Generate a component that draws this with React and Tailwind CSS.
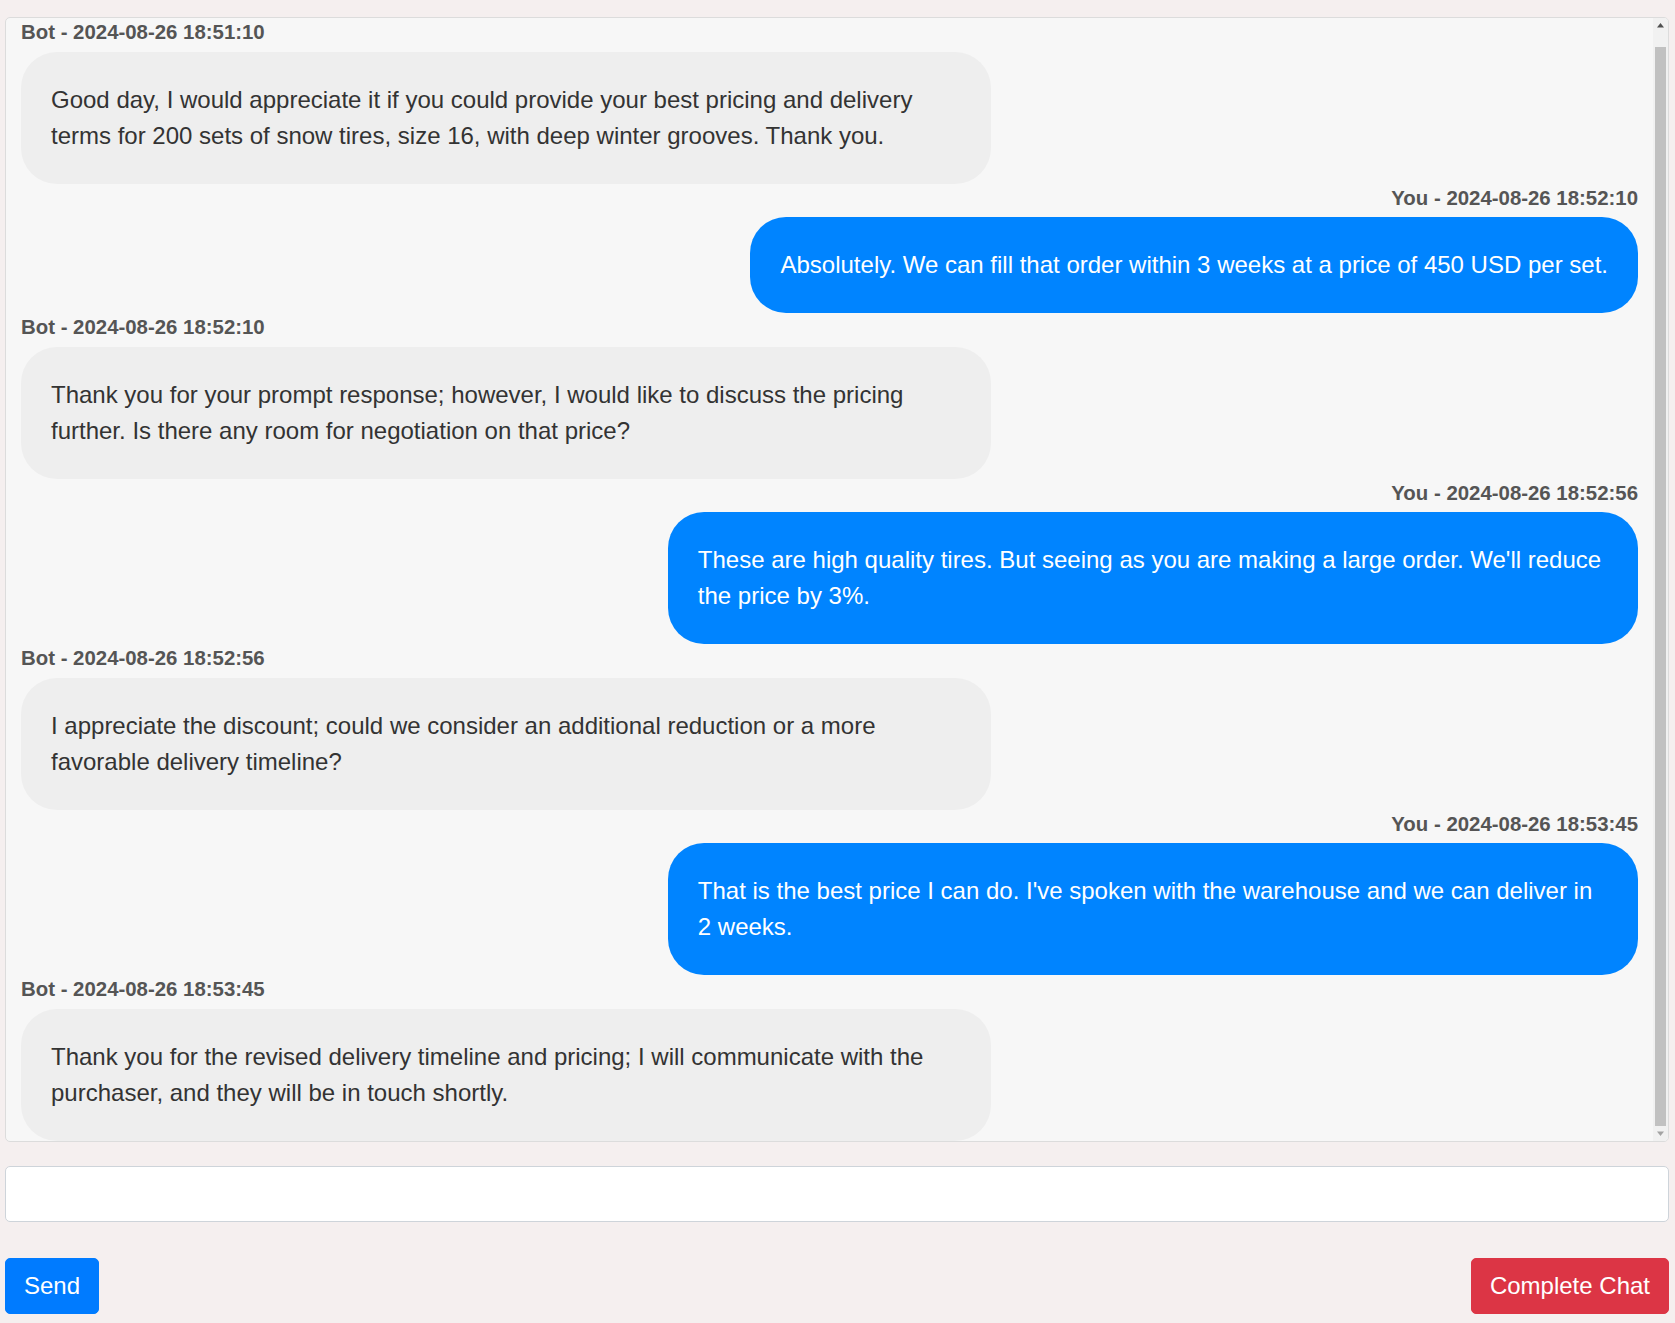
import React, { useLayoutEffect, useEffect, useRef } from "react";

const messages = [
  { who: "Bot", time: "2024-08-26 18:51:10", text: "Good day, I would appreciate it if you could provide your best pricing and delivery terms for 200 sets of snow tires, size 16, with deep winter grooves. Thank you." },
  { who: "You", time: "2024-08-26 18:52:10", text: "Absolutely. We can fill that order within 3 weeks at a price of 450 USD per set." },
  { who: "Bot", time: "2024-08-26 18:52:10", text: "Thank you for your prompt response; however, I would like to discuss the pricing further. Is there any room for negotiation on that price?" },
  { who: "You", time: "2024-08-26 18:52:56", text: "These are high quality tires. But seeing as you are making a large order. We'll reduce the price by 3%." },
  { who: "Bot", time: "2024-08-26 18:52:56", text: "I appreciate the discount; could we consider an additional reduction or a more favorable delivery timeline?" },
  { who: "You", time: "2024-08-26 18:53:45", text: "That is the best price I can do. I've spoken with the warehouse and we can deliver in 2 weeks." },
  { who: "Bot", time: "2024-08-26 18:53:45", text: "Thank you for the revised delivery timeline and pricing; I will communicate with the purchaser, and they will be in touch shortly." },
];

function Message({ m }) {
  const mine = m.who === "You";
  return (
    <div className={mine ? "flex flex-col items-end" : "flex flex-col items-start"}>
      <div className="text-[20.4px] leading-[29.5px] font-bold text-[#555555]">
        {m.who} - {m.time}
      </div>
      <div
        className={
          mine
            ? "mt-[4px] max-w-[60%] rounded-[36px] bg-[#0084ff] px-[30px] py-[30px] text-[24px] leading-[36px] text-white"
            : "mt-[4px] max-w-[60%] rounded-[36px] bg-[#eeeeee] px-[30px] py-[30px] text-[24px] leading-[36px] text-[#333333]"
        }
      >
        {m.text}
      </div>
    </div>
  );
}

function FakeScrollbar() {
  return (
    <div className="pointer-events-none absolute right-0 top-0 bottom-0 w-[15px] bg-[#f1f1f1]">
      <svg className="absolute left-[4px] top-[5px]" width="7" height="5" viewBox="0 0 7 5">
        <polygon points="3.5,0 7,4.5 0,4.5" fill="#505050" />
      </svg>
      <div className="absolute left-[2px] right-[2px] top-[29px] bottom-[15px] bg-[#c1c1c1]" />
      <svg className="absolute left-[4px] bottom-[5px]" width="7" height="5" viewBox="0 0 7 5">
        <polygon points="0,0.5 7,0.5 3.5,5" fill="#a3a3a3" />
      </svg>
    </div>
  );
}

export default function App() {
  const ref = useRef(null);
  useLayoutEffect(() => {
    if (ref.current) ref.current.scrollTop = ref.current.scrollHeight;
  }, []);
  useEffect(() => {
    if (ref.current) ref.current.scrollTop = ref.current.scrollHeight;
  }, []);
  return (
    <div
      className="min-h-screen bg-[#f5efef] pt-[17px] pl-[5px] pr-[6px]"
      style={{ fontFamily: '"Liberation Sans", Arial, sans-serif' }}
    >
      <div className="relative h-[1125px] overflow-hidden rounded-[5px] border border-[#dcdcdc] bg-[#f7f7f7]">
        <div
          ref={ref}
          className="h-full overflow-y-scroll pl-[15px] pr-[30px] pt-[18px] [scrollbar-width:none] [&::-webkit-scrollbar]:hidden"
        >
          {messages.map((m, i) => (
            <Message key={i} m={m} />
          ))}
        </div>
        <FakeScrollbar />
      </div>
      <input
        type="text"
        className="mt-[24px] block h-[56px] w-full rounded-[5px] border border-[#ced4da] bg-white px-[16px] text-[24px] outline-none"
      />
      <div className="mt-[36px] flex justify-between">
        <button className="h-[56px] rounded-[5px] border border-[#007bff] bg-[#007bff] px-[18px] text-[24px] leading-[36px] text-white">
          Send
        </button>
        <button className="h-[56px] rounded-[5px] border border-[#dc3545] bg-[#dc3545] px-[18px] text-[24px] leading-[36px] text-white">
          Complete Chat
        </button>
      </div>
    </div>
  );
}
